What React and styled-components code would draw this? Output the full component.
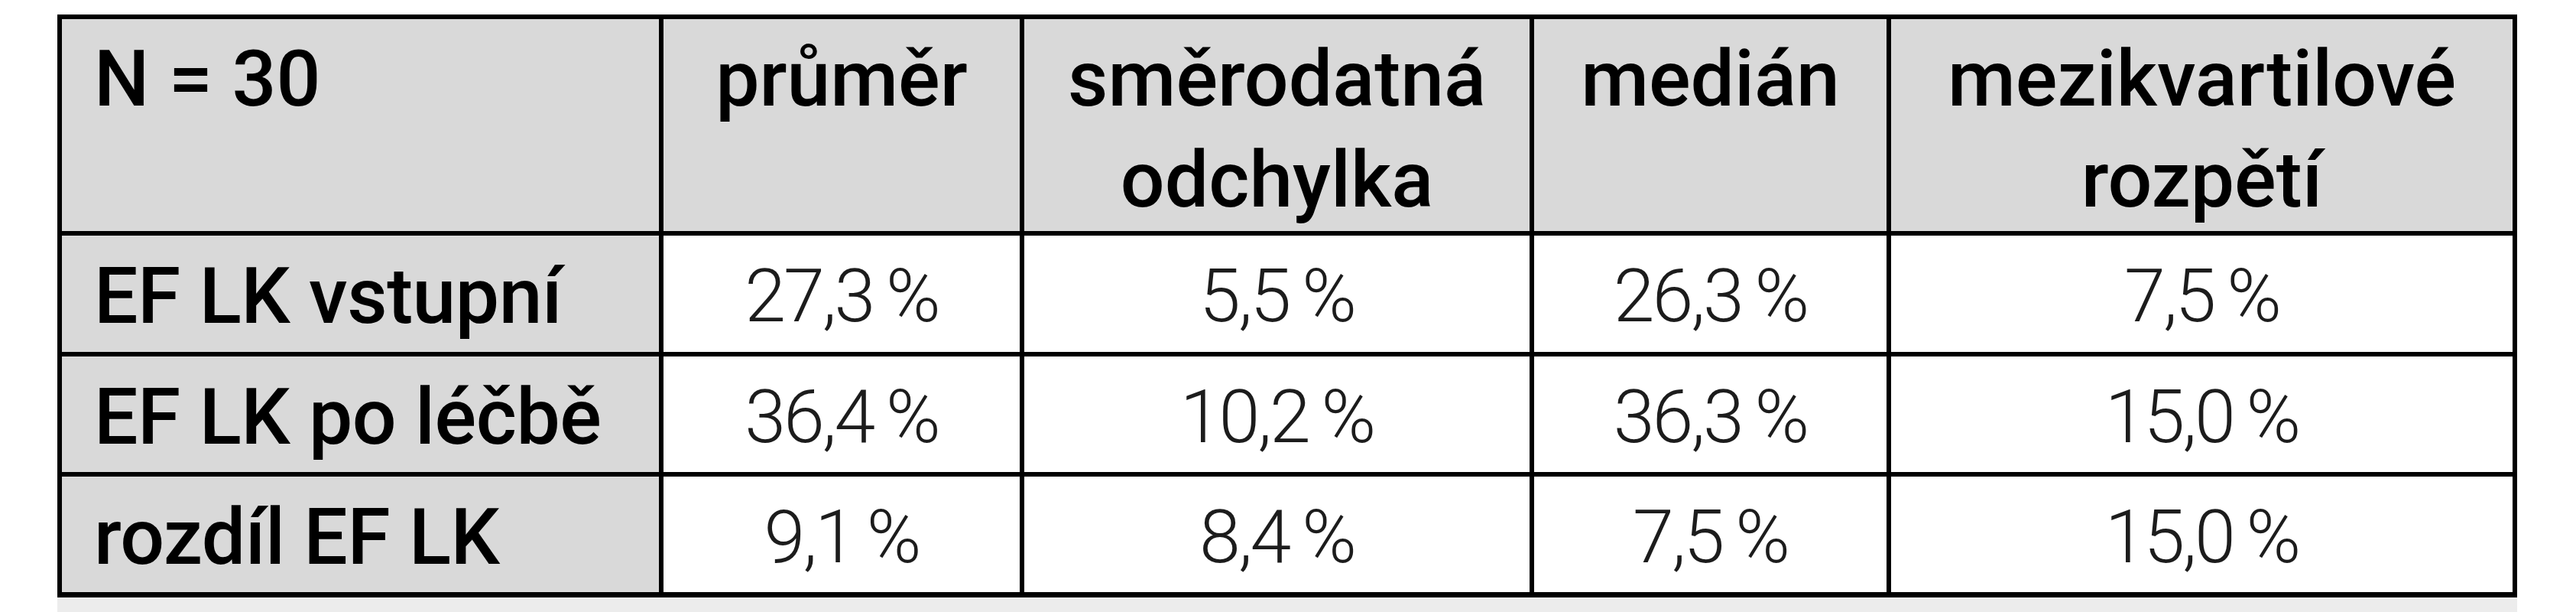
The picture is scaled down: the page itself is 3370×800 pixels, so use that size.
import React from "react";
import styled, { createGlobalStyle } from "styled-components";

const GlobalStyle = createGlobalStyle`
  html, body { margin: 0; padding: 0; background: #ffffff; }
  body { font-family: Roboto, "Noto Sans", sans-serif; }
`;

const Page = styled.div`
  padding: 17px 0 0 75px;
`;

const Backdrop = styled.div`
  width: 3218px;
  background: #ececec;
  padding: 2px 0 40px;
`;

const Table = styled.div`
  display: grid;
  grid-template-columns: 781px 466px 661px 461px 813px;
  grid-template-rows: 277px 152px 151px 151px;
  column-gap: 6px;
  row-gap: 6px;
  padding: 6px 6px 7px 6px;
  background: #000000;
`;

const HeadCell = styled.div`
  background: #d9d9d9;
  color: #000000;
  font-family: Roboto, "Noto Sans", sans-serif;
  font-weight: 500;
  font-size: 102px;
  line-height: 132px;
  padding: 12px ${(p) => (p.$left ? "20px 0 42px" : "20px 0 20px")};
  text-align: ${(p) => (p.$left ? "left" : "center")};
  overflow: hidden;
`;

const LabelCell = styled.div`
  background: #d9d9d9;
  color: #000000;
  font-family: Roboto, "Noto Sans", sans-serif;
  font-weight: 500;
  font-size: 102px;
  line-height: 132px;
  letter-spacing: -0.5px;
  display: flex;
  align-items: center;
  padding: 6px 0 0 42px;
  white-space: nowrap;
`;

const ValueCell = styled.div`
  background: #ffffff;
  color: #1c1c1c;
  font-family: Roboto, "Noto Sans", sans-serif;
  font-weight: 300;
  font-size: 97px;
  line-height: 132px;
  letter-spacing: -3px;
  display: flex;
  align-items: center;
  justify-content: center;
  padding-top: 6px;
  white-space: nowrap;
`;

const headers = ["průměr", "směrodatná odchylka", "medián", "mezikvartilové rozpětí"];

const rows = [
  { label: "EF LK vstupní", values: ["27,3", "5,5", "26,3", "7,5"] },
  { label: "EF LK po léčbě", values: ["36,4", "10,2", "36,3", "15,0"] },
  { label: "rozdíl EF LK", values: ["9,1", "8,4", "7,5", "15,0"] },
];

export default function App() {
  return (
    <>
      <GlobalStyle />
      <Page>
        <Backdrop>
          <Table role="table">
            <HeadCell $left role="columnheader">N = 30</HeadCell>
            {headers.map((h) => (
              <HeadCell key={h} role="columnheader">{h}</HeadCell>
            ))}
            {rows.map((r) => (
              <React.Fragment key={r.label}>
                <LabelCell role="rowheader">{r.label}</LabelCell>
                {r.values.map((v, i) => (
                  <ValueCell key={i} role="cell">{v}{"\u2009"}%</ValueCell>
                ))}
              </React.Fragment>
            ))}
          </Table>
        </Backdrop>
      </Page>
    </>
  );
}
